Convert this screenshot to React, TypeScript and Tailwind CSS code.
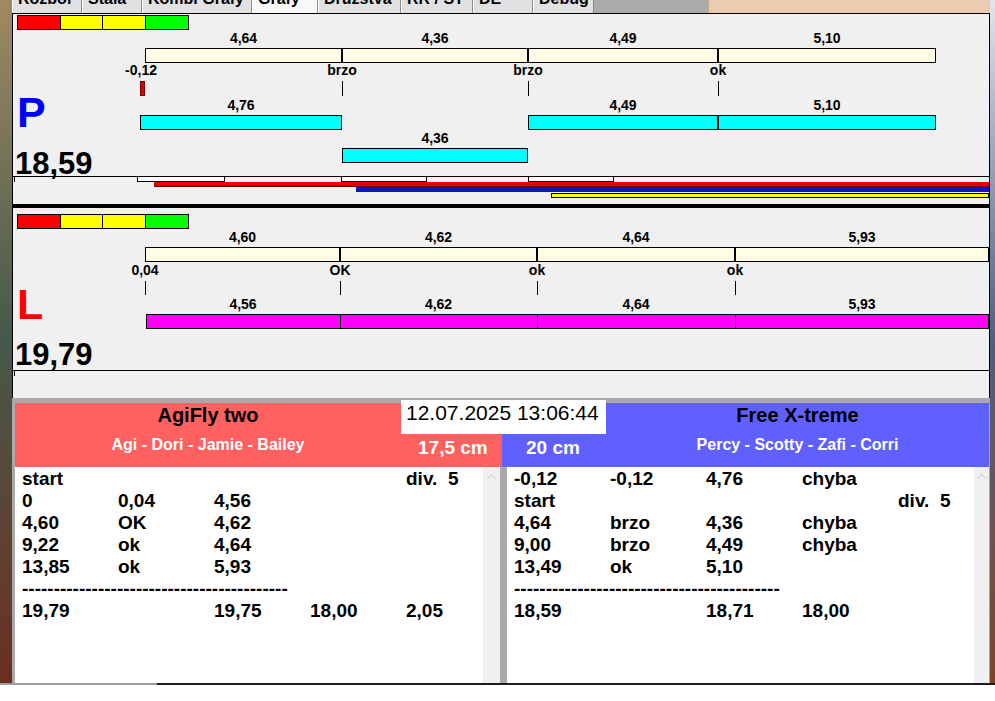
import React from 'react';

// page x of the charts' inner left edge (window starts at 12, 1px border)
const X0 = 13;

type Seg = [number, number, string];

interface BarRow {
  top: number;
  cls: string;
  segs: Seg[];
  thin?: boolean;
}

interface Mark {
  x: number;
  t: string;
}

interface ChartProps {
  colorTop: number;
  letter: string;
  letterCls: string;
  letterTop: number;
  total: string;
  totalTop: number;
  plan: BarRow;
  marksTop: number;
  marks: Mark[];
  ticksTop: number;
  ticksH: number;
  ticks: number[];
  early?: [number, number];
  rows: BarRow[];
  children?: React.ReactNode;
}

const tabs = [
  { label: 'Rozbor', w: 'w-[70px]' },
  { label: 'Stala', w: 'w-[60px]' },
  { label: 'Kombi Grafy', w: 'w-[110px]' },
  { label: 'Grafy', w: 'w-[66px]', active: true },
  { label: 'Družstva', w: 'w-[83px]' },
  { label: 'RR / ST', w: 'w-[72px]' },
  { label: 'DE', w: 'w-[60px]' },
  { label: 'Debug', w: 'w-[61px]' },
];

const DASHES = '-'.repeat(42);

const leftRows: (string[] | string)[] = [
  ['start', '', '', '', 'div.  5'],
  ['0', '0,04', '4,56', '', ''],
  ['4,60', 'OK', '4,62', '', ''],
  ['9,22', 'ok', '4,64', '', ''],
  ['13,85', 'ok', '5,93', '', ''],
  DASHES,
  ['19,79', '', '19,75', '18,00', '2,05'],
];

const rightRows: (string[] | string)[] = [
  ['-0,12', '-0,12', '4,76', 'chyba', ''],
  ['start', '', '', '', 'div.  5'],
  ['4,64', 'brzo', '4,36', 'chyba', ''],
  ['9,00', 'brzo', '4,49', 'chyba', ''],
  ['13,49', 'ok', '5,10', '', ''],
  DASHES,
  ['18,59', '', '18,71', '18,00', ''],
];

function Label({ x, top, text }: { x: number; top: number; text: string }) {
  return (
    <div
      className="absolute -translate-x-1/2 whitespace-nowrap text-[14px] leading-[16px] font-bold text-black"
      style={{ left: x - X0, top }}
    >
      {text}
    </div>
  );
}

function Bars({ top, cls, segs, thin }: BarRow) {
  return (
    <>
      {segs.map(([a, b, t], i) => (
        <React.Fragment key={i}>
          <Label x={(a + b) / 2} top={top - 18} text={t} />
          <div
            className={`absolute h-[15px] border border-black ${cls}`}
            style={{ left: a - X0, top, width: b - a + (thin && i < segs.length - 1 ? 1 : 0) }}
          />
        </React.Fragment>
      ))}
    </>
  );
}

function ColorBar({ top }: { top: number }) {
  return (
    <div className="absolute left-[4px] flex gap-px bg-black p-px" style={{ top }}>
      <div className="w-[42px] h-[13px] bg-[#ff0000]" />
      <div className="w-[41px] h-[13px] bg-[#ffff00]" />
      <div className="w-[42px] h-[13px] bg-[#ffff00]" />
      <div className="w-[42px] h-[13px] bg-[#00ff00]" />
    </div>
  );
}

function Chart(p: ChartProps) {
  return (
    <div className="relative h-[190px] border-x border-black bg-[#f0f0f0] overflow-hidden">
      <ColorBar top={p.colorTop} />
      <Bars {...p.plan} />
      {p.marks.map((m) => (
        <Label key={m.x} x={m.x} top={p.marksTop} text={m.t} />
      ))}
      {p.ticks.map((x) => (
        <div key={x} className="absolute w-px bg-black" style={{ left: x - X0, top: p.ticksTop, height: p.ticksH }} />
      ))}
      {p.early && (
        <div
          className="absolute border border-[#7a0000] bg-[#e00000]"
          style={{ left: p.early[0] - X0, top: p.ticksTop, width: p.early[1] - p.early[0], height: p.ticksH }}
        />
      )}
      <div className={`absolute left-[4px] text-[43px] leading-none font-bold ${p.letterCls}`} style={{ top: p.letterTop }}>
        {p.letter}
      </div>
      <div className="absolute left-[2px] text-[31px] leading-none font-bold text-black" style={{ top: p.totalTop }}>
        {p.total}
      </div>
      {p.rows.map((r, i) => (
        <Bars key={i} {...r} />
      ))}
      {/* time axis */}
      <div className="absolute left-0 right-0 top-[162px] h-px bg-black" />
      <div className="absolute left-[1px] top-[162px] w-px h-[6px] bg-black" />
      {p.children}
    </div>
  );
}

function Timeline() {
  const boxes = [
    [137, 225],
    [341, 427],
    [528, 614],
  ];
  return (
    <>
      {boxes.map(([a, b]) => (
        <div
          key={a}
          className="absolute top-[162px] h-[6px] border border-black bg-white"
          style={{ left: a - X0, width: b - a }}
        />
      ))}
      <div className="absolute left-[141px] right-0 top-[168px] h-[5px] bg-[#e60000] border-b border-[#6a0000]" />
      <div className="absolute left-[343px] right-0 top-[173px] h-[5px] bg-[#1212c8]" />
      <div className="absolute left-[538px] right-0 top-[179px] h-[5px] border border-black bg-[#ffff00]" />
    </>
  );
}

function ResultList({ rows }: { rows: (string[] | string)[] }) {
  return (
    <div className="text-[19px] leading-[22px] font-bold text-black">
      {rows.map((row, i) =>
        typeof row === 'string' ? (
          <div key={i} className="whitespace-pre">{row}</div>
        ) : (
          <div key={i} className="flex">
            {row.map((c, j) => (
              <div key={j} className="w-[96px] shrink-0 whitespace-pre">
                {c}
              </div>
            ))}
          </div>
        )
      )}
    </div>
  );
}

function ScrollBar({ w }: { w: string }) {
  return (
    <div className={`${w} bg-[#f0f0f0] flex justify-center pt-[7px]`}>
      <svg width="9" height="5" viewBox="0 0 9 5">
        <polyline points="0.5,4.5 4.5,0.5 8.5,4.5" fill="none" stroke="#c4c4c4" strokeWidth="1" />
      </svg>
    </div>
  );
}

export default function App() {
  return (
    <div className="w-[995px] h-[701px] overflow-hidden bg-white font-['Liberation_Sans',Arial,sans-serif]">
      <div className="flex h-[683px]">
        {/* desktop behind window */}
        <div className="w-[12px] bg-linear-to-b from-[#a08a62] via-[#44584a] to-[#6a2e22]" />

        <div className="w-[978px] flex flex-col">
          {/* tab strip, cut at top of screen */}
          <div className="h-[13px] flex overflow-hidden">
            {tabs.map((t) => (
              <div
                key={t.label}
                className={`${t.w} h-full overflow-hidden border-l border-l-white border-r border-r-[#8c8c8c] ${
                  t.active ? 'bg-[#f8f8f8]' : 'bg-[#e1e1e1]'
                }`}
              >
                <div className="-mt-[9px] pl-[5px] text-[16px] leading-[16px] font-bold text-black whitespace-nowrap">
                  {t.label}
                </div>
              </div>
            ))}
            <div className="w-[114px] h-full bg-[#ababab]" />
            <div className="flex-1 h-full bg-[#ecccb0] border-l border-[#c9a888]" />
          </div>
          <div className="h-px bg-black" />

          <Chart
            colorTop={1}
            letter="P"
            letterCls="text-[#0000ff]"
            letterTop={77}
            total="18,59"
            totalTop={134}
            plan={{
              top: 34,
              cls: 'bg-[#fffde6]',
              segs: [
                [145, 342, '4,64'],
                [342, 528, '4,36'],
                [528, 718, '4,49'],
                [718, 936, '5,10'],
              ],
            }}
            marksTop={48}
            marks={[
              { x: 141, t: '-0,12' },
              { x: 342, t: 'brzo' },
              { x: 528, t: 'brzo' },
              { x: 718, t: 'ok' },
            ]}
            ticksTop={67}
            ticksH={15}
            ticks={[342, 528, 718]}
            early={[140, 145]}
            rows={[
              {
                top: 101,
                cls: 'bg-[#00ffff]',
                segs: [
                  [140, 342, '4,76'],
                  [528, 718, '4,49'],
                  [718, 936, '5,10'],
                ],
              },
              { top: 134, cls: 'bg-[#00ffff]', segs: [[342, 528, '4,36']] },
            ]}
          >
            <Timeline />
          </Chart>

          <div className="h-[4px] bg-black" />

          <Chart
            colorTop={6}
            letter="L"
            letterCls="text-[#ff0000]"
            letterTop={75}
            total="19,79"
            totalTop={131}
            plan={{
              top: 39,
              cls: 'bg-[#fffde6]',
              segs: [
                [145, 340, '4,60'],
                [340, 537, '4,62'],
                [537, 735, '4,64'],
                [735, 989, '5,93'],
              ],
            }}
            marksTop={54}
            marks={[
              { x: 145, t: '0,04' },
              { x: 340, t: 'OK' },
              { x: 537, t: 'ok' },
              { x: 735, t: 'ok' },
            ]}
            ticksTop={73}
            ticksH={14}
            ticks={[145, 340, 537, 735]}
            rows={[
              {
                top: 106,
                cls: 'bg-[#ff00ff]',
                thin: true,
                segs: [
                  [146, 340, '4,56'],
                  [340, 537, '4,62'],
                  [537, 735, '4,64'],
                  [735, 989, '5,93'],
                ],
              },
            ]}
          />

          {/* results */}
          <div className="relative h-[285px] bg-[#a9a9a9] pt-[5px] pl-[3px] flex">
            <div className="w-[487px] flex flex-col">
              <div className="h-[64px] bg-[#ff6060] flex">
                <div className="w-[386px] flex flex-col items-center">
                  <div className="text-[20px] leading-[24px] font-bold text-black">AgiFly two</div>
                  <div className="mt-[8px] text-[16px] leading-[20px] font-bold text-white">Agi - Dori - Jamie - Bailey</div>
                </div>
                <div className="flex-1 pt-[34px] pl-[17px] text-[19px] leading-[22px] font-bold text-white whitespace-nowrap">
                  17,5 cm
                </div>
              </div>
              <div className="h-[216px] flex">
                <div className="w-[468px] bg-white pl-[7px] pt-px">
                  <ResultList rows={leftRows} />
                </div>
                <ScrollBar w="w-[17px]" />
              </div>
            </div>

            <div className="w-[487px] flex flex-col">
              <div className="h-[64px] bg-[#6060ff] flex">
                <div className="w-[104px] pt-[34px] pl-[24px] text-[19px] leading-[22px] font-bold text-white whitespace-nowrap">
                  20 cm
                </div>
                <div className="flex-1 flex flex-col items-center">
                  <div className="text-[20px] leading-[24px] font-bold text-black">Free X-treme</div>
                  <div className="mt-[8px] text-[16px] leading-[20px] font-bold text-white">Percy - Scotty - Zafi - Corri</div>
                </div>
              </div>
              <div className="h-[216px] flex pl-[5px]">
                <div className="w-[467px] bg-white pl-[7px] pt-px">
                  <ResultList rows={rightRows} />
                </div>
                <ScrollBar w="w-[15px]" />
              </div>
            </div>

            {/* date stamp over both headers */}
            <div className="absolute left-[389px] top-[2px] w-[205px] h-[34px] bg-white pl-[5px] text-[21px] leading-[25px] text-black whitespace-nowrap">
              12.07.2025 13:06:44
            </div>
          </div>
        </div>

        <div className="w-[5px] bg-linear-to-b from-[#dfe6ee] via-[#4e5f80] to-[#7a4526]" />
      </div>
      <div className="flex h-[2px]">
        <div className="w-[157px] bg-[#9c9c9c]" />
        <div className="flex-1 bg-[#1e1e1e]" />
      </div>
    </div>
  );
}
